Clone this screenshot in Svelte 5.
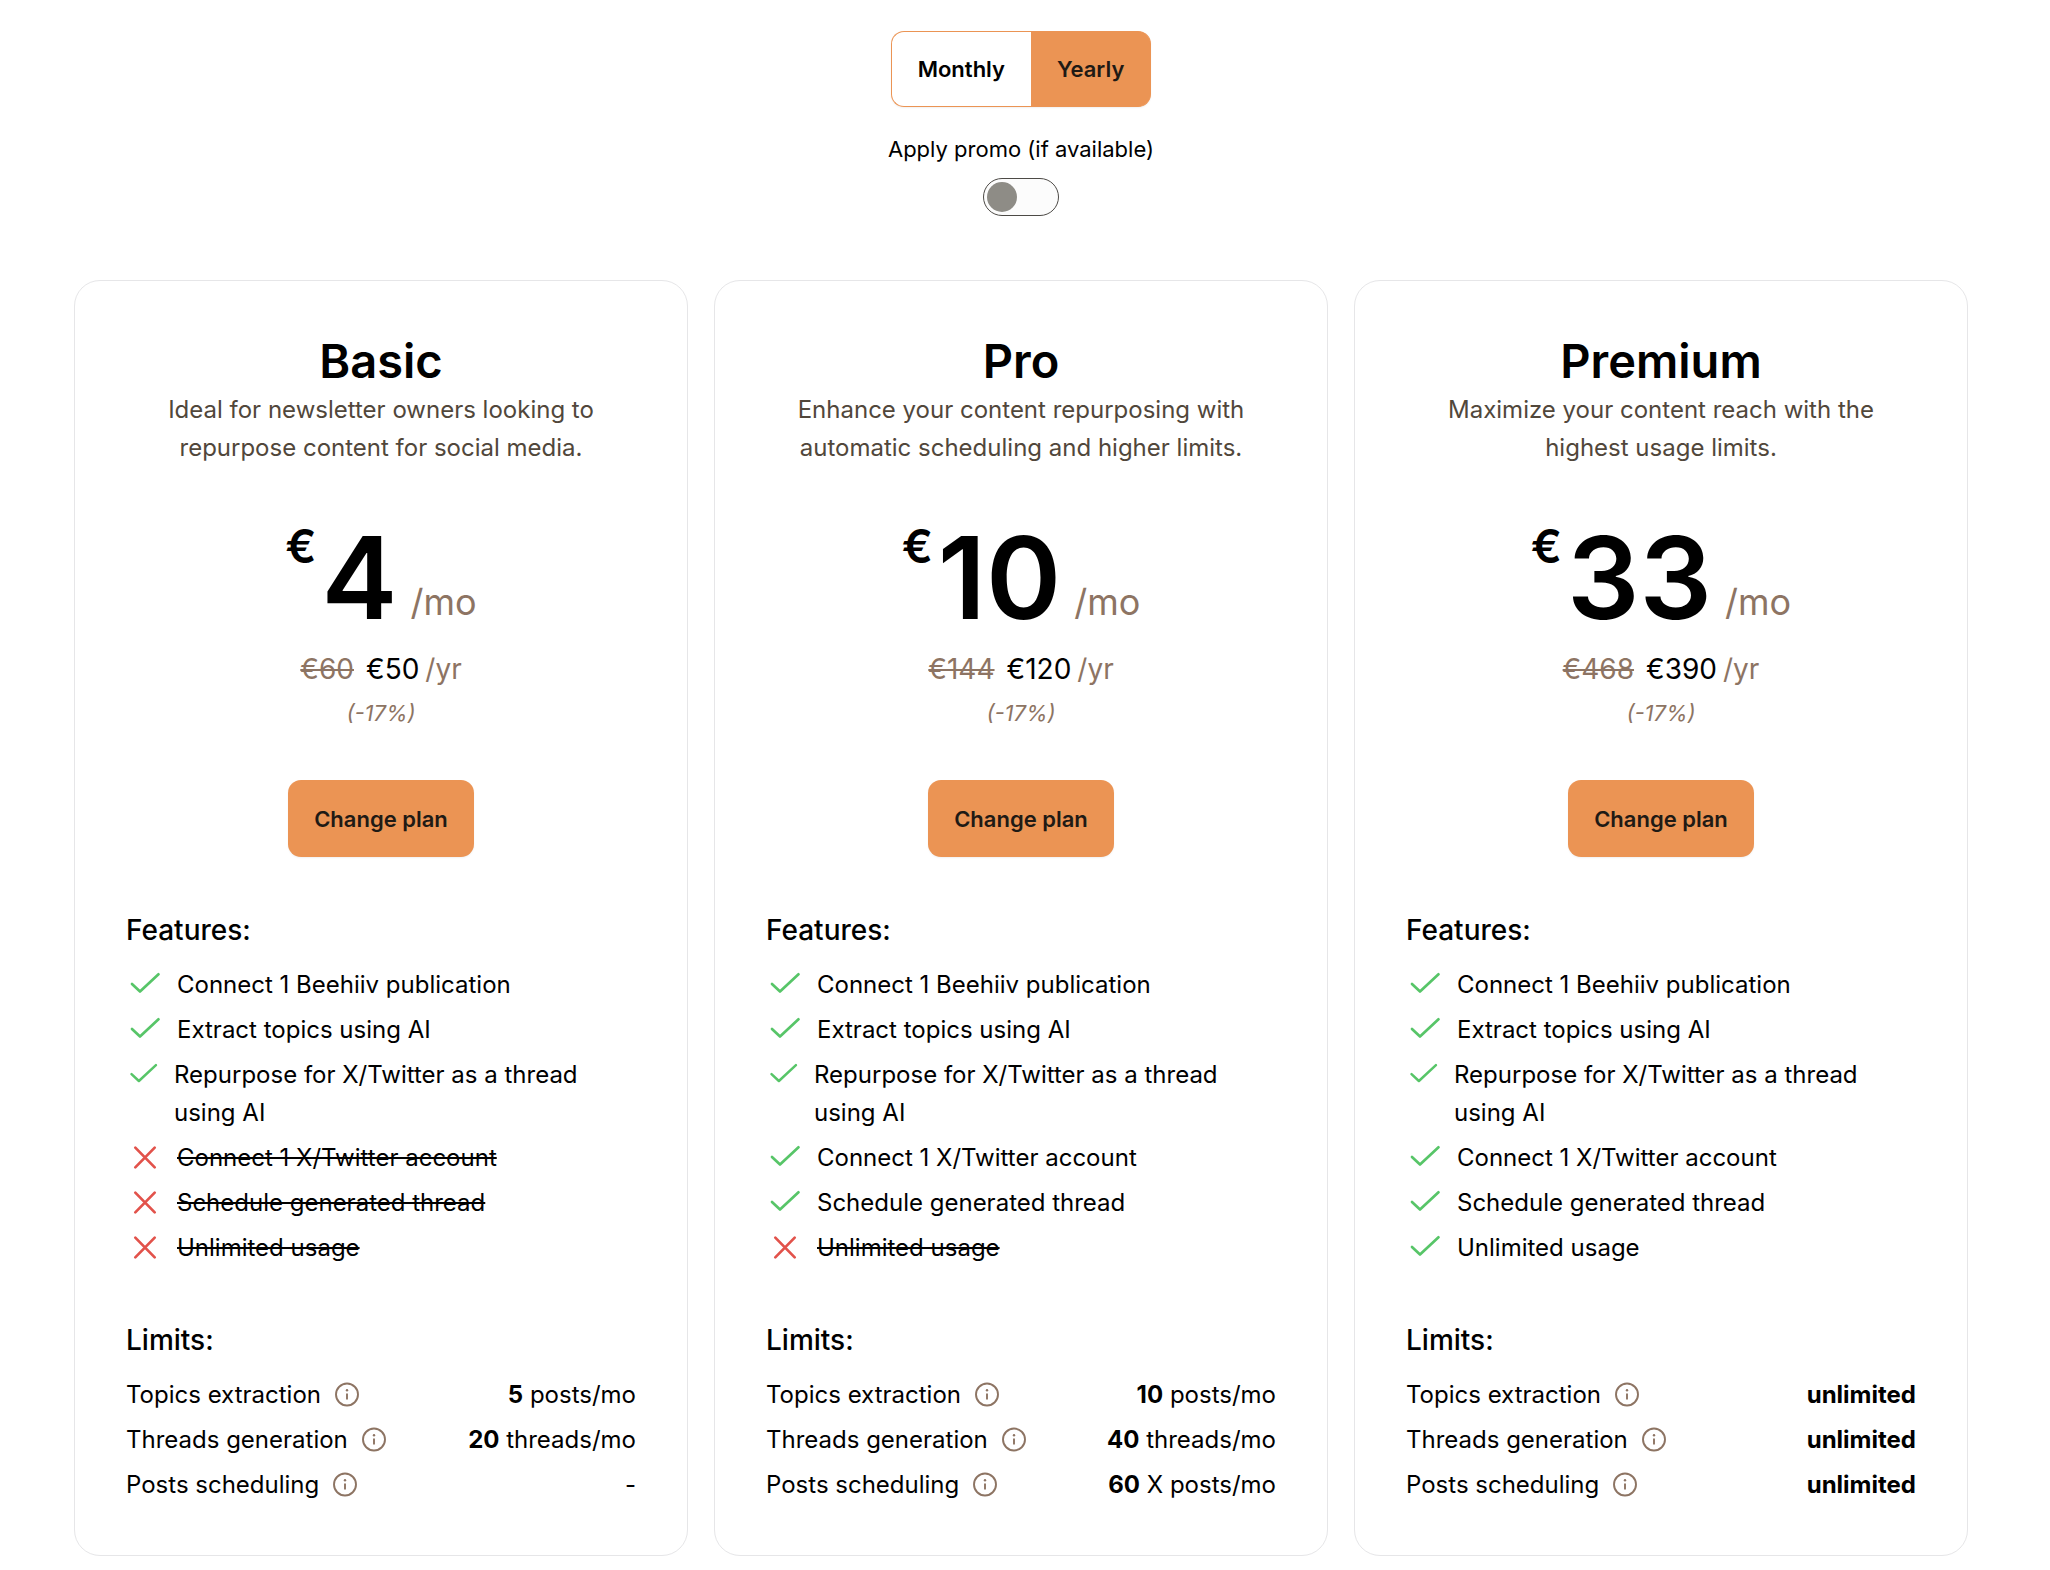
<script>
  const perks = [
    'Connect 1 Beehiiv publication',
    'Extract topics using AI',
    'Repurpose for X/Twitter as a thread using AI',
    'Connect 1 X/Twitter account',
    'Schedule generated thread',
    'Unlimited usage',
  ];
  const limitNames = ['Topics extraction', 'Threads generation', 'Posts scheduling'];

  const plans = [
    {
      name: 'Basic',
      text: 'Ideal for newsletter owners looking to repurpose content for social media.',
      month: 4,
      before: 60,
      year: 50,
      included: 3,
      limits: [['5', 'posts/mo'], ['20', 'threads/mo'], ['', '-']],
    },
    {
      name: 'Pro',
      text: 'Enhance your content repurposing with automatic scheduling and higher limits.',
      month: 10,
      before: 144,
      year: 120,
      included: 5,
      limits: [['10', 'posts/mo'], ['40', 'threads/mo'], ['60', 'X posts/mo']],
    },
    {
      name: 'Premium',
      text: 'Maximize your content reach with the highest usage limits.',
      month: 33,
      before: 468,
      year: 390,
      included: 6,
      limits: [['unlimited', ''], ['unlimited', ''], ['unlimited', '']],
    },
  ];

  let period = $state('Yearly');
  let promo = $state(false);
</script>

<main>
  <div class="controls">
    <div class="periods">
      {#each ['Monthly', 'Yearly'] as p}
        <button class="period" class:active={period === p} aria-pressed={period === p} onclick={() => (period = p)}>{p}</button>
      {/each}
    </div>
    <label class="promo">
      <span>Apply promo (if available)</span>
      <input type="checkbox" role="switch" class="toggle" bind:checked={promo} />
    </label>
  </div>

  <div class="plans">
    {#each plans as plan}
      <section class="card">
        <h2>{plan.name}</h2>
        <p class="about">{plan.text}</p>

        <div class="price">
          <span class="currency">€</span>
          <span class="amount">{plan.month}</span>
          <span class="unit">/mo</span>
        </div>
        <div class="yearly">
          <s>€{plan.before}</s>
          <span class="total">€{plan.year}</span>
          <span class="per">/yr</span>
        </div>
        <em class="discount">(-17%)</em>

        <button class="change">Change plan</button>

        <h3>Features:</h3>
        <ul class="features">
          {#each perks as perk, i}
            <li>
              <svg class="mark" class:off={i >= plan.included} viewBox="0 0 38 38" aria-hidden="true">
                {#if i < plan.included}
                  <path d="M6 18 14 25.5 32.5 8.3" />
                {:else}
                  <path d="M9.3 8.6 28.7 28.4M28.7 8.6 9.3 28.4" />
                {/if}
              </svg>
              {#if i < plan.included}<span>{perk}</span>{:else}<s>{perk}</s>{/if}
            </li>
          {/each}
        </ul>

        <h3>Limits:</h3>
        <ul class="limits">
          {#each limitNames as name, i}
            <li>
              <span class="limit-name">
                {name}
                <svg class="info" viewBox="0 0 26 26" aria-hidden="true">
                  <circle cx="13" cy="12.5" r="11" />
                  <path d="M13 11.5v6" />
                  <circle class="dot" cx="13" cy="8.2" r="1.2" />
                </svg>
              </span>
              <span><b>{plan.limits[i][0]}</b> {plan.limits[i][1]}</span>
            </li>
          {/each}
        </ul>
      </section>
    {/each}
  </div>
</main>

<style>
  :global(body) {
    margin: 0;
    background: #fff;
  }
  main {
    padding: 31px 82px 15px 74px;
    font-family: Inter, 'Liberation Sans', sans-serif;
    font-size: 24px;
    line-height: 38px;
    color: #000;
  }
  button {
    font: inherit;
    cursor: pointer;
  }
  h2, h3, p, ul {
    margin: 0;
    padding: 0;
  }
  .controls {
    display: flex;
    flex-direction: column;
    align-items: center;
    margin-bottom: 64px;
  }
  .periods {
    display: flex;
    border-radius: 13px;
    box-shadow: 0 1px 2px rgb(0 0 0 / 6%);
  }
  .period {
    height: 76px;
    padding: 0 26px;
    border: 1px solid #eb9454;
    background: #fff;
    color: #000;
    font-size: 22px;
    font-weight: 600;
  }
  .period:first-child {
    border-radius: 13px 0 0 13px;
    border-right: 0;
  }
  .period:last-child {
    border-left: 0;
    border-radius: 0 13px 13px 0;
  }
  .period.active {
    background: #eb9454;
    color: #1f1a15;
  }
  .promo {
    display: flex;
    flex-direction: column;
    align-items: center;
    gap: 13px;
    margin-top: 26px;
    font-size: 22px;
    line-height: 32px;
  }
  .toggle {
    appearance: none;
    box-sizing: border-box;
    width: 76px;
    height: 38px;
    margin: 0;
    padding: 3px;
    border: 1px solid #4d4a46;
    border-radius: 19px;
    background: #fcfcfc;
  }
  .toggle::before {
    content: '';
    display: block;
    width: 30px;
    height: 30px;
    border-radius: 50%;
    background: #8e8c86;
  }
  .toggle:checked::before {
    margin-left: auto;
    background: #eb9454;
  }
  .plans {
    display: grid;
    grid-template-columns: repeat(3, 1fr);
    gap: 26px;
  }
  .card {
    display: flex;
    flex-direction: column;
    padding: 51px;
    border: 1px solid #e6e6e8;
    border-radius: 26px;
  }
  h2 {
    font-size: 47px;
    line-height: 58px;
    font-weight: 600;
    text-align: center;
  }
  .about {
    margin-top: 1px;
    color: #51473b;
    text-align: center;
  }
  .price {
    display: flex;
    justify-content: center;
    align-items: flex-end;
    margin-top: 53px;
    line-height: 115px;
  }
  .currency {
    align-self: flex-start;
    margin-right: 5px;
    font-size: 46px;
    line-height: 53px;
    font-weight: 600;
  }
  .amount {
    font-size: 114px;
    font-weight: 600;
  }
  .unit {
    margin-left: 13px;
    font-size: 36px;
    line-height: 66px;
  }
  .unit, .yearly, .discount {
    color: #8d7463;
  }
  .yearly {
    display: flex;
    justify-content: center;
    gap: 6px;
    margin-top: 12px;
    font-size: 28px;
    line-height: 45px;
  }
  .total {
    margin-left: 6px;
    color: #000;
  }
  .discount {
    margin-top: 5px;
    font-size: 22px;
    line-height: 32px;
    text-align: center;
  }
  .change {
    align-self: center;
    height: 77px;
    margin: 51px 0;
    padding: 0 26px;
    border: 0;
    border-radius: 13px;
    background: #eb9454;
    color: #1f1a15;
    font-size: 22px;
    font-weight: 600;
    box-shadow: 0 1px 2px rgb(0 0 0 / 6%);
  }
  h3 {
    font-size: 28px;
    line-height: 45px;
    font-weight: 500;
    margin-bottom: 13px;
  }
  ul {
    display: flex;
    flex-direction: column;
    gap: 7px;
    list-style: none;
  }
  .features {
    margin-bottom: 51px;
  }
  li {
    display: flex;
  }
  .features li {
    gap: 13px;
  }
  .mark {
    width: 38px;
    min-width: 0;
    height: 38px;
    fill: none;
    stroke: #57c568;
    stroke-width: 2.7;
    stroke-linecap: round;
    stroke-linejoin: round;
  }
  .mark.off {
    stroke: #e2524b;
  }
  .limits li {
    justify-content: space-between;
  }
  .limit-name {
    display: flex;
    align-items: center;
    gap: 13px;
  }
  .info {
    width: 26px;
    height: 26px;
    fill: none;
    stroke: #8d7463;
    stroke-width: 1.9;
  }
  .dot {
    fill: #8d7463;
    stroke: none;
  }
  b {
    font-weight: 700;
  }
</style>
